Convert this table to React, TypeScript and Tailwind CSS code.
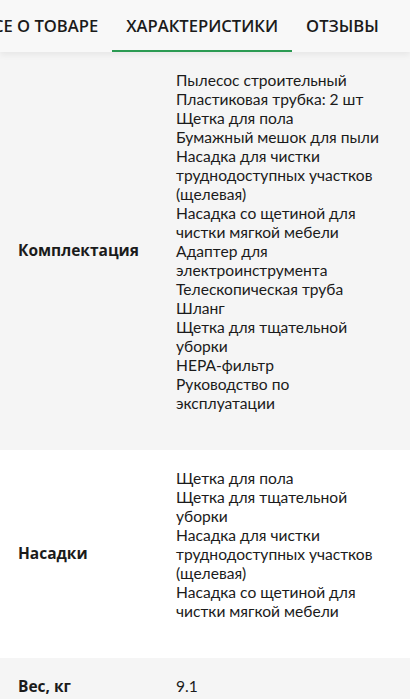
const tabs = ["Все о товаре", "Характеристики", "Отзывы"];

type Spec = { label: string; values: string[]; tone: "gray" | "white" };

const specs: Spec[] = [
  {
    label: "Комплектация",
    tone: "gray",
    values: [
      "Пылесос строительный",
      "Пластиковая трубка: 2 шт",
      "Щетка для пола",
      "Бумажный мешок для пыли",
      "Насадка для чистки труднодоступных участков (щелевая)",
      "Насадка со щетиной для чистки мягкой мебели",
      "Адаптер для электроинструмента",
      "Телескопическая труба",
      "Шланг",
      "Щетка для тщательной уборки",
      "HEPA-фильтр",
      "Руководство по эксплуатации",
    ],
  },
  {
    label: "Насадки",
    tone: "white",
    values: [
      "Щетка для пола",
      "Щетка для тщательной уборки",
      "Насадка для чистки труднодоступных участков (щелевая)",
      "Насадка со щетиной для чистки мягкой мебели",
    ],
  },
  { label: "Вес, кг", tone: "gray", values: ["9.1"] },
];

export default function App() {
  return (
    <div className="h-[699px] w-[410px] overflow-hidden bg-white font-['Lato',sans-serif] text-[#1b1b1b]">
      <div className="relative z-10 h-[52px] overflow-hidden bg-[#f8f8f8] shadow-[0_3px_6px_rgba(0,0,0,0.06)]">
        <div className="ml-[-32px] flex h-full whitespace-nowrap">
          {tabs.map((t, i) => (
            <div
              key={t}
              className={
                "flex h-full items-center border-b-2 px-[14px] pt-[2px] font-['Open_Sans',sans-serif] text-[16.6px] font-semibold uppercase " +
                (i === 1 ? "border-[#2a9a52]" : "border-transparent")
              }
            >
              {t}
            </div>
          ))}
        </div>
      </div>

      {specs.map((s, idx) => (
        <div key={s.label} className={"flex " + (s.tone === "gray" ? "bg-[#f5f5f5]" : "bg-white")}>
          <div className="flex w-[176px] shrink-0 items-center pl-[18px] font-['Open_Sans',sans-serif] text-[15.5px] font-bold">
            {s.label}
          </div>
          <div
            className={
              "w-[214px] pt-[19px] text-[15.6px] leading-[19px] " +
              (idx === specs.length - 1 ? "pb-[19px]" : "pb-[37px]")
            }
          >
            {s.values.map((v) => (
              <div key={v}>{v}</div>
            ))}
          </div>
        </div>
      ))}
    </div>
  );
}
